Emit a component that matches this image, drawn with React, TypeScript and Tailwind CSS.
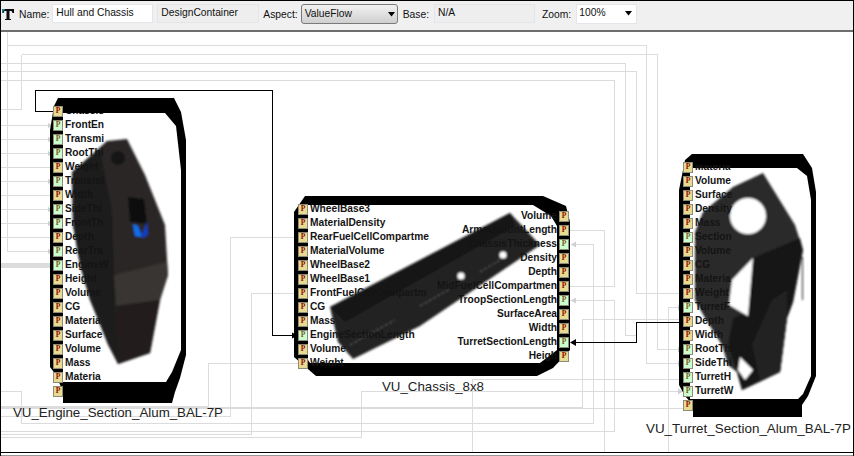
import React from "react";

const GREY = "#dcdcdc";

type Row = [string, boolean];

const engineRows: Row[] = [
  ["Chassis", false], ["FrontEn", true], ["Transmi", true], ["RootThi", true], ["Weight", false],
  ["Transmi", true], ["Width", false], ["SideThi", true], ["FrontTh", true], ["Depth", false],
  ["RearTra", true], ["EngineW", true], ["Height", false], ["Volume", false], ["CG", false],
  ["Materia", false], ["Surface", false], ["Volume", false], ["Mass", false], ["Materia", false], ["", false],
];
const chassisLeft: Row[] = [
  ["WheelBase3", false], ["MaterialDensity", false], ["RearFuelCellCompartme", false], ["MaterialVolume", false],
  ["WheelBase2", false], ["WheelBase1", false], ["FrontFuelCellCompartm", false], ["CG", false], ["Mass", false],
  ["EngineSectionLength", true], ["Volume", false], ["Weight", false],
];
const chassisRight: Row[] = [
  ["Volume", false], ["ArmorMountLength", false], ["ChassisThickness", true], ["Density", false], ["Depth", false],
  ["MidFuelCellCompartmen", false], ["TroopSectionLength", true], ["SurfaceArea", false], ["Width", false],
  ["TurretSectionLength", true], ["Heigh", false],
];
const turretRows: Row[] = [
  ["Materia", false], ["Volume", false], ["Surface", false], ["Density", false], ["Mass", false], ["Section", true],
  ["Volume", false], ["CG", false], ["Materia", false], ["Weight", false], ["TurretF", true], ["Depth", false],
  ["Width", false], ["RootThi", true], ["SideThi", true], ["TurretH", true], ["TurretW", true], ["", false],
];

const greyLines = [
  "M7.5 32V251.5H53", "M7.5 45.5H646.5V363.5", "M21.5 54.5H657.5V349.5H683", "M0 109.5H21.5V54.5",
  "M0 63.5H625.5V335.5H636", "M0 71.5H636.5V293.5H683", "M0 80.5H614.5V286.5H569",
  "M646.5 363.5H683",
  "M0 125.5H53", "M0 139.5H53", "M0 153.5H53", "M0 167.5H53", "M0 181.5H53", "M0 195.5H53", "M0 209.5H53", "M0 223.5H53", "M0 237.5H53",
  "M298 237.5H230.5V416.5H0", "M298 293.5H251.5V434.5H0", "M298 363.5H208.5V406.5H0",
  "M0 391.5H21.5V423.5H593.5V244.5H571", "M0 431.5H614.5V300.5H569", "M0 437.5H361.5V391.5H683",
  "M569 230.5H604.5V456", "M683 319.5H582.5V408", "M683 307.5H668.5V456", "M472.5 456V379.5H683", "M582 408.5H683",
];

function Port({ green }: { green: boolean }) {
  return (
    <span
      className={`flex h-[11px] w-[10px] shrink-0 items-center justify-center border border-[#8c8c78] font-['Liberation_Serif',serif] text-[7.5px] font-bold leading-none ${
        green ? "bg-[#ccffd0] text-[#7a5a20]" : "bg-[#e8da90] text-[#8a1000]"
      }`}
    >
      P
    </span>
  );
}

function PortColumn({ rows, clip, right, className }: { rows: Row[]; clip?: Record<number, string>; right?: boolean; className: string }) {
  return (
    <div className={`absolute flex flex-col ${right ? "items-end" : "items-start"} ${className}`}>
      {rows.map(([label, green], i) => (
        <div key={i} className={`flex h-[14px] items-center gap-[2px] ${right ? "flex-row-reverse" : ""}`}>
          <Port green={green} />
          <span
            className="whitespace-nowrap text-[10.2px] font-bold leading-[14px] text-[#141414]"
            style={clip && clip[i] ? { clipPath: clip[i] } : undefined}
          >
            {label}
          </span>
        </div>
      ))}
    </div>
  );
}

function Field({ children, white, className }: { children: React.ReactNode; white?: boolean; className: string }) {
  return (
    <div
      className={`flex h-[19px] items-center border border-[#e2e6ea] px-[3px] pb-[1px] ${
        white ? "bg-white" : "bg-[#eeeeee]"
      } ${className}`}
    >
      {children}
    </div>
  );
}

function Arrow() {
  return (
    <svg width="7" height="5" viewBox="0 0 7 5" className="ml-auto shrink-0">
      <path d="M0 0H7L3.5 4.5Z" fill="#000" />
    </svg>
  );
}

export default function App() {
  return (
    <div className="relative flex h-[456px] w-[854px] flex-col overflow-hidden bg-white font-['Liberation_Sans',Arial,sans-serif]">
      <div className="flex h-[32px] shrink-0 items-start gap-[3px] border-b-2 border-[#6e6e6e] bg-[#f0f0f0] pl-[2px] pt-[4px] text-[10.3px] leading-none text-[#111]">
        <svg width="12" height="11" viewBox="0 0 12 11" className="mt-[5px] shrink-0">
          <path d="M0 0H12V4H10.5L9.5 2H7.5V10H9V11H3V10H4.5V2H2.5L1.5 4H0Z" fill="#0c0c10" />
          <path d="M0 0H3V1.5H1.5L1 4H0Z" fill="#1a7a8c" />
        </svg>
        <span className="ml-[2px] mt-[6px]">Name:</span>
        <Field white className="w-[101px]">Hull and Chassis</Field>
        <Field className="ml-[1px] w-[102px]">DesignContainer</Field>
        <span className="ml-[1px] mt-[6px]">Aspect:</span>
        <div className="flex h-[20px] w-[97px] items-center rounded-[3px] border border-[#7a7a7a] bg-gradient-to-b from-[#f2f2f2] to-[#cfcfcf] pl-[3px] pr-[2px]">
          ValueFlow
          <Arrow />
        </div>
        <span className="ml-[2px] mt-[6px]">Base:</span>
        <Field className="ml-[2px] w-[101px]">N/A</Field>
        <span className="ml-[4px] mt-[6px]">Zoom:</span>
        <div className="ml-[2px] flex h-[20px] w-[61px] items-center border border-[#e2e6ea] bg-white pb-[1px] pl-[2px] pr-[4px]">
          100%
          <Arrow />
        </div>
      </div>

      <div className="relative h-[421px] shrink-0 overflow-hidden border-b border-black bg-white">
        <svg className="absolute left-0 top-0" width="854" height="424" viewBox="0 32 854 424">
          <defs>
            <filter id="soft" x="-10%" y="-10%" width="120%" height="120%">
              <feGaussianBlur stdDeviation="0.9" />
            </filter>
            <filter id="edge" x="-5%" y="-5%" width="110%" height="110%">
              <feGaussianBlur stdDeviation="0.4" />
            </filter>
          </defs>

          <g fill="none" stroke={GREY} strokeWidth="1" shapeRendering="crispEdges">
            {greyLines.map((d) => (
              <path key={d} d={d} />
            ))}
            <path d="M0 408H582" strokeWidth="2" />
            <path d="M0 265.5H53" strokeWidth="5" />
          </g>
          <g fill="#d0d0d0">
            <path d="M571 244.5l5-3v6Z" />
            <path d="M571 300.5l5-3v6Z" />
            <path d="M683 307.5l-5-3v6Z" />
            <path d="M683 349.5l-5-3v6Z" />
            <path d="M683 363.5l-5-3v6Z" />
            <path d="M683 391.5l-5-3v6Z" />
            <path d="M53 125.5l-5-2.5v5Z" />
            <path d="M53 139.5l-5-2.5v5Z" />
            <path d="M53 153.5l-5-2.5v5Z" />
            <path d="M53 181.5l-5-2.5v5Z" />
            <path d="M53 209.5l-5-2.5v5Z" />
            <path d="M53 223.5l-5-2.5v5Z" />
            <path d="M53 251.5l-5-2.5v5Z" />
          </g>

          {/* frames */}
          <g filter="url(#edge)">
            <path d="M58 98H174L181 112L186 140V355L180 378L175 392L172 403H63V392L56 375L50 367V130L54 106Z" fill="#000" />
            <path d="M63 113H165L176 126L181 170V350L172 372L166 382H63Z" fill="#fff" />
            <path d="M305 196H543L566 206L570 222V350L553 368L537 376H316L294 357V212Z" fill="#000" />
            <path d="M308 205H533L551 216L557 226V350L540 363H310L308 360Z" fill="#fff" />
            <path d="M692 154H803L812 168L816 192V376L808 396L802 405V417H693V405L685 396L679 385V190L685 160Z" fill="#000" />
            <path d="M690 168H797L807 176L811 200V376L803 394L798 399H690Z" fill="#fff" />
          </g>

          {/* engine image */}
          <g filter="url(#soft)">
            <path d="M107 141L127 139L145 175L165 225L168 275L160 300L150 353L118 364L108 345L90 300L80 265L73 225L72 172Z" fill="#292826" />
            <path d="M72 172L100 150L112 210L115 300L118 364L90 300L80 265L73 225Z" fill="#1c1c1b" />
            <path d="M114 275L167 262L168 275L160 300L116 306Z" fill="#373633" />
            <path d="M116 306L160 300L150 353L118 364Z" fill="#201f1e" />
            <circle cx="118" cy="158" r="7" fill="#151515" />
            <path d="M128 197L144 199L147 224L130 222Z" fill="#0c0c0c" />
            <path d="M133 224L138 226L142 237L135 236Z" fill="#1070f0" />
            <path d="M141 236L147 222L148 234L144 238Z" fill="#1040c0" />
          </g>

          {/* chassis image */}
          <g filter="url(#soft)">
            <path d="M330 307L510 213L540 245L420 326L353 359L338 342Z" fill="#222222" />
            <path d="M510 213L515 226L345 322L330 307Z" fill="#191919" />
            <circle cx="461" cy="276" r="3.5" fill="#fff" />
            <circle cx="503" cy="255" r="3.5" fill="#fff" />
            <path d="M350 345L395 320M420 306L450 289M480 272L500 260" stroke="#666" strokeWidth="1" strokeDasharray="3 2" />
          </g>

          {/* turret image */}
          <g filter="url(#soft)">
            <path d="M763 173L733 187L703 212L695 232V300L705 318L722 345L728 365L737 372L742 390L780 372L787 318L793 302L803 250L795 225Z" fill="#2c2c2c" />
            <path d="M753 258L800 238L803 250L793 302L787 318L780 372L742 390L737 372L728 345L733 318L748 312Z" fill="#171717" />
            <path d="M772 300L787 290L787 318L780 372L760 380L752 345Z" fill="#242424" />
            <circle cx="748" cy="216" r="18" fill="#fff" />
            <path d="M753 258L732 280L729 305L748 316Z" fill="#fff" />
            <path d="M740 357L753 370L745 380L738 370Z" fill="#fff" />
            <path d="M802.5 257V300" stroke="#222" strokeWidth="1" />
          </g>

          <g fill="none" stroke="#000" strokeWidth="1" shapeRendering="crispEdges">
            <path d="M53 111.5H35.5V90.5H272.5V335.5H296" />
            <path d="M572 342.5H636.5V322.5H683" />
          </g>
          <path d="M298 335.5l-6-3v6Z" fill="#000" />
          <path d="M570 342.5l6-3.5v7Z" fill="#000" />
        </svg>

        <PortColumn rows={engineRows} clip={{ 0: "inset(9px 0 0 0)" }} className="left-[53px] top-[72px]" />
        <PortColumn rows={chassisLeft} clip={{ 0: "inset(3px 0 0 0)", 11: "inset(0 0 4px 0)" }} className="left-[298px] top-[170px]" />
        <PortColumn rows={chassisRight} right className="left-[406px] top-[177px] w-[163px]" />
        <PortColumn rows={turretRows} clip={{ 0: "inset(5px 0 0 0)" }} className="left-[683px] top-[128px]" />

        <div className="absolute left-[13px] top-[374px] whitespace-nowrap text-[13.3px] leading-none text-[#222]">VU_Engine_Section_Alum_BAL-7P</div>
        <div className="absolute left-[382px] top-[348px] whitespace-nowrap text-[13.3px] leading-none text-[#222]">VU_Chassis_8x8</div>
        <div className="absolute left-[646px] top-[390px] whitespace-nowrap text-[13.4px] leading-none text-[#222]">VU_Turret_Section_Alum_BAL-7P</div>
      </div>

      <div className="h-[3px] shrink-0 border-b border-[#999] bg-white" />
      <div className="pointer-events-none absolute inset-0 border-x border-t border-black" />
    </div>
  );
}
